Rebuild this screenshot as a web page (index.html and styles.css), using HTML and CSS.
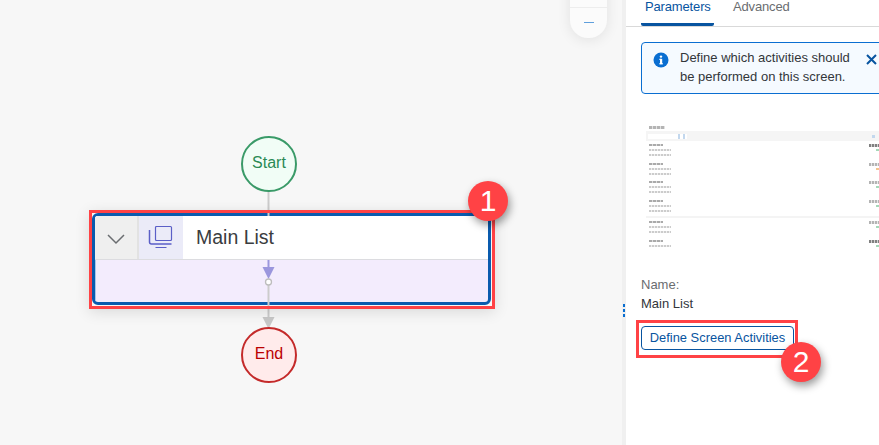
FILE: index.html
```html
<!DOCTYPE html>
<html lang="en">
<head>
  <meta charset="UTF-8" />
  <title>Main List</title>
  <link rel="stylesheet" href="styles.css">
</head>
<body>

  <div class="canvas">
    <div class="zoom-control">
      <div class="zoom-line"></div>
      <div class="zoom-minus"></div>
    </div>

    <div class="block">
      <div class="block-head">
        <div class="block-toggle">
          <svg width="20" height="12" viewBox="0 0 20 12"><path d="M2 2 L10 10 L18 2" fill="none" stroke="#6a6d70" stroke-width="1.5"/></svg>
        </div>
        <div class="block-icon">
          <svg width="26" height="26" viewBox="0 0 26 26" fill="none" stroke="#5b5fc7" stroke-width="1.2">
            <rect x="7.5" y="1.5" width="16" height="14" rx="1"/>
            <path d="M1.5 5 V17 Q1.5 19 3.5 19 H23.5" stroke-width="1.5"/>
            <path d="M7.5 22.5 H18.5"/>
          </svg>
        </div>
        <div class="block-title">Main List</div>
      </div>
      <div class="block-body"></div>
    </div>

    <svg class="connectors" width="622" height="445">
      <path d="M268.5 190 V216" stroke="#cccccc" stroke-width="2"/>
      <path d="M268.5 260 V270" stroke="#9b96dd" stroke-width="2"/>
      <path d="M262.5 267 H274.5 L268.5 279 Z" fill="#9b96dd"/>
      <path d="M268.5 285 V320" stroke="#cccccc" stroke-width="2"/>
      <circle cx="268.5" cy="282" r="3" fill="#fff" stroke="#bdbdbd" stroke-width="1.3"/>
      <path d="M262.5 317 H274.5 L268.5 329 Z" fill="#c8c8c8"/>
    </svg>

    <div class="node node-start">Start</div>
    <div class="node node-end">End</div>
    <div class="highlight highlight-block"></div>
    <div class="badge badge-one">1</div>
    <div class="splitter"><span></span><span></span><span></span></div>
  </div>

  <div class="panel">
    <div class="tabs">
      <div class="tab tab-active">Parameters</div>
      <div class="tab">Advanced</div>
    </div>

    <div class="strip">
      <svg class="strip-icon" width="16" height="16" viewBox="0 0 16 16">
        <circle cx="8" cy="8" r="7.5" fill="#0a6ed1"/>
        <rect x="7" y="6.8" width="2.2" height="5.4" fill="#fff"/>
        <rect x="6.2" y="6.8" width="1.5" height="1" fill="#fff"/>
        <rect x="6.2" y="11.3" width="3.8" height="1" fill="#fff"/>
        <circle cx="8" cy="4.6" r="1.2" fill="#fff"/>
      </svg>
      <div class="strip-text">Define which activities should be performed on this screen.</div>
      <svg class="strip-close" width="11" height="11" viewBox="0 0 11 11"><path d="M1 1 L10 10 M10 1 L1 10" stroke="#0854a0" stroke-width="2"/></svg>
    </div>

    <div class="thumb">
      <div class="thumb-title"></div>
      <div class="thumb-bar">
        <div class="thumb-search"></div>
        <div class="thumb-sort"></div>
      </div>
      <div class="thumb-group">
        <div class="thumb-row">
          <div><div class="mini mini-dark"></div><div class="mini"></div><div class="mini"></div></div>
          <div class="thumb-right"><div class="mini-date mini-bold"></div><div class="mini-state"></div></div>
        </div>
        <div class="thumb-row">
          <div><div class="mini mini-dark"></div><div class="mini"></div><div class="mini"></div></div>
          <div class="thumb-right"><div class="mini-date"></div><div class="mini-state mini-orange"></div></div>
        </div>
        <div class="thumb-row">
          <div><div class="mini mini-dark"></div><div class="mini"></div><div class="mini"></div></div>
          <div class="thumb-right"><div class="mini-date"></div><div class="mini-state"></div></div>
        </div>
        <div class="thumb-row">
          <div><div class="mini mini-dark"></div><div class="mini"></div><div class="mini"></div></div>
          <div class="thumb-right"><div class="mini-date"></div><div class="mini-state"></div></div>
        </div>
      </div>
      <div class="thumb-group thumb-group-next">
        <div class="thumb-row">
          <div><div class="mini mini-dark"></div><div class="mini"></div><div class="mini"></div></div>
          <div class="thumb-right"><div class="mini-date"></div><div class="mini-state"></div></div>
        </div>
        <div class="thumb-row">
          <div><div class="mini mini-dark"></div><div class="mini"></div><div class="mini"></div></div>
          <div class="thumb-right"><div class="mini-date mini-bold"></div><div class="mini-state"></div></div>
        </div>
      </div>
    </div>

    <div class="field-label">Name:</div>
    <div class="field-value">Main List</div>
    <button class="define-btn" type="button">Define Screen Activities</button>

    <div class="highlight highlight-btn"></div>
    <div class="badge badge-two">2</div>
  </div>

</body>
</html>
```

FILE: styles.css
```css
html, body {
  margin: 0;
  height: 100%;
}
body {
  width: 879px;
  height: 445px;
  overflow: hidden;
  display: flex;
  background: #f7f7f7;
  color: #32363a;
  font-family: "Liberation Sans", Arial, sans-serif;
}

/* canvas */
.canvas {
  position: relative;
  width: 626px;
  flex: none;
  background: #f7f7f7;
}
.zoom-control {
  position: absolute;
  left: 570px;
  top: -20px;
  width: 37px;
  height: 58px;
  background: #fbfbfb;
  border-radius: 0 0 18px 18px;
  box-shadow: 0 2px 14px rgba(0, 0, 0, 0.09);
}
.zoom-line {
  margin-top: 27px;
  height: 1px;
  background: #ededed;
}
.zoom-minus {
  width: 10px;
  height: 1px;
  margin: 14px auto 0;
  background: #5f9fdc;
}
.splitter {
  position: absolute;
  right: 0;
  top: 0;
  bottom: 0;
  width: 4px;
  background: #f0f0f0;
  display: flex;
  flex-direction: column;
  align-items: center;
  gap: 2px;
  padding-top: 304px;
  box-sizing: border-box;
}
.splitter span {
  width: 2px;
  height: 3px;
  background: #0a6ed1;
}

/* flow block */
.block {
  position: absolute;
  left: 92px;
  top: 213px;
  width: 399px;
  height: 92px;
  box-sizing: border-box;
  border: 3px solid #0a5bae;
  border-radius: 6px;
  background: #f3ecfd;
  overflow: hidden;
  display: flex;
  flex-direction: column;
}
.block-head {
  display: flex;
  height: 44px;
  flex: none;
  background: #fff;
  border-bottom: 1px solid #dcdce0;
  box-sizing: border-box;
}
.block-toggle {
  width: 44px;
  background: #efefef;
  border-right: 2px solid #e2e2e2;
  display: flex;
  align-items: center;
  justify-content: center;
  padding-top: 3px;
  box-sizing: border-box;
  flex: none;
}
.block-icon {
  width: 44px;
  background: #ebebf8;
  display: flex;
  align-items: center;
  justify-content: center;
  flex: none;
}
.block-title {
  padding-left: 13px;
  font-size: 19.5px;
  line-height: 43px;
  color: #3a3d40;
}
.block-body {
  flex: 1;
  box-shadow: inset 1px 0 0 #a8c6ea;
}
.connectors {
  position: absolute;
  left: 0;
  top: 0;
}
.node {
  position: absolute;
  left: 241px;
  width: 56px;
  height: 56px;
  box-sizing: border-box;
  border-radius: 50%;
  border: 2px solid;
  display: flex;
  align-items: center;
  justify-content: center;
  font-size: 16px;
  padding-bottom: 2px;
}
.node-start {
  top: 136px;
  border-color: #3a9a68;
  background: #f1fdf6;
  color: #2a8a55;
}
.node-end {
  top: 327px;
  border-color: #c42a2a;
  background: #ffebeb;
  color: #bb0000;
}

/* annotations */
.highlight {
  position: absolute;
  box-sizing: border-box;
  border: 3px solid #ff4245;
}
.highlight-block {
  left: 89px;
  top: 210px;
  width: 406px;
  height: 99px;
  box-shadow: 0 3px 14px rgba(0, 0, 0, 0.12);
}
.highlight-btn {
  left: 10px;
  top: 320px;
  width: 162px;
  height: 38px;
}
.badge {
  position: absolute;
  width: 40px;
  height: 40px;
  border-radius: 50%;
  background: #ff4245;
  color: #fff;
  font-size: 30px;
  display: flex;
  align-items: center;
  justify-content: center;
  box-shadow: 2px 4px 8px rgba(0, 0, 0, 0.4);
}
.badge-one {
  left: 468px;
  top: 181px;
}
.badge-two {
  left: 155px;
  top: 342px;
}

/* right panel */
.panel {
  position: relative;
  flex: 1;
  background: #fff;
  padding-left: 15px;
  overflow: hidden;
}
.tabs {
  display: flex;
  gap: 15px;
  height: 27px;
  margin-left: -15px;
  padding-left: 15px;
  border-bottom: 1px solid #d9d9d9;
  box-sizing: border-box;
}
.tab {
  font-size: 13px;
  line-height: 13px;
  letter-spacing: -0.15px;
  color: #6a6d70;
  padding: 0 4px;
}
.tab-active {
  width: 73px;
  box-sizing: border-box;
  color: #0854a0;
  height: 26px;
  border-bottom: 3px solid #0854a0;
  border-radius: 0 0 2px 2px;
}
.strip {
  display: flex;
  align-items: flex-start;
  width: 250px;
  height: 52px;
  margin-top: 15px;
  box-sizing: border-box;
  border: 1px solid #0a6ed1;
  border-radius: 4px;
  background: #f5faff;
  padding: 5px 0 0 11px;
}
.strip-icon {
  flex: none;
  margin-top: 4px;
}
.strip-text {
  width: 176px;
  margin-left: 11px;
  font-size: 13px;
  line-height: 19px;
}
.strip-close {
  flex: none;
  margin: 6px 0 0 10px;
}

/* screen preview */
.thumb {
  width: 233px;
  height: 123px;
  margin-top: 31px;
  margin-left: 5px;
  overflow: hidden;
}
.thumb-title {
  width: 16px;
  height: 3px;
  margin: 1px 0 2px 3px;
  background: repeating-linear-gradient(90deg, #b4b4b4 0 3px, #e2e2e2 3px 4px);
  filter: blur(0.4px);
}
.thumb-bar {
  height: 10px;
  background: #f5f5f5;
  display: flex;
  justify-content: space-between;
  align-items: center;
  padding: 0 4px 0 2px;
}
.thumb-search {
  width: 39px;
  height: 5px;
  background: linear-gradient(90deg, #fff 0 30px, #c3d8ee 30px 32px, #fff 32px 35px, #c3d8ee 35px 37px, #fff 37px);
}
.thumb-sort {
  width: 3px;
  height: 3px;
  background: #c3d8ee;
}
.thumb-row {
  height: 18.6px;
  box-sizing: border-box;
  padding-top: 3px;
  display: flex;
  justify-content: space-between;
  filter: blur(0.5px);
}
.thumb-group-next {
  border-top: 2px solid #f4f4f4;
  margin-top: 1px;
}
.mini {
  width: 22px;
  height: 2px;
  margin: 0 0 3px 3px;
  background: repeating-linear-gradient(90deg, #cccccc 0 2px, #efefef 2px 3px);
}
.mini-dark {
  width: 14px;
  background: repeating-linear-gradient(90deg, #aaa 0 3px, #dcdcdc 3px 4px);
}
.thumb-right {
  display: flex;
  flex-direction: column;
  align-items: flex-end;
  width: 12px;
}
.mini-date {
  width: 10px;
  height: 3px;
  background: repeating-linear-gradient(90deg, #b4b4b4 0 2px, #e8e8e8 2px 3px);
}
.mini-bold {
  background: repeating-linear-gradient(90deg, #808080 0 2px, #d0d0d0 2px 3px);
}
.mini-state {
  width: 3px;
  height: 2px;
  margin-top: 2px;
  background: #a5d8b8;
}
.mini-orange {
  background: #f4c48c;
}

.field-label {
  margin-top: 29px;
  font-size: 13px;
  line-height: 15px;
  color: #6a6d70;
}
.field-value {
  margin-top: 4px;
  font-size: 13px;
  line-height: 15px;
}
.define-btn {
  display: block;
  margin-top: 15px;
  width: 153px;
  height: 24px;
  padding: 0 0 2px;
  box-sizing: border-box;
  background: #fff;
  border: 1px solid #0854a0;
  border-radius: 4px;
  color: #0854a0;
  font-family: inherit;
  font-size: 12.9px;
}
```
